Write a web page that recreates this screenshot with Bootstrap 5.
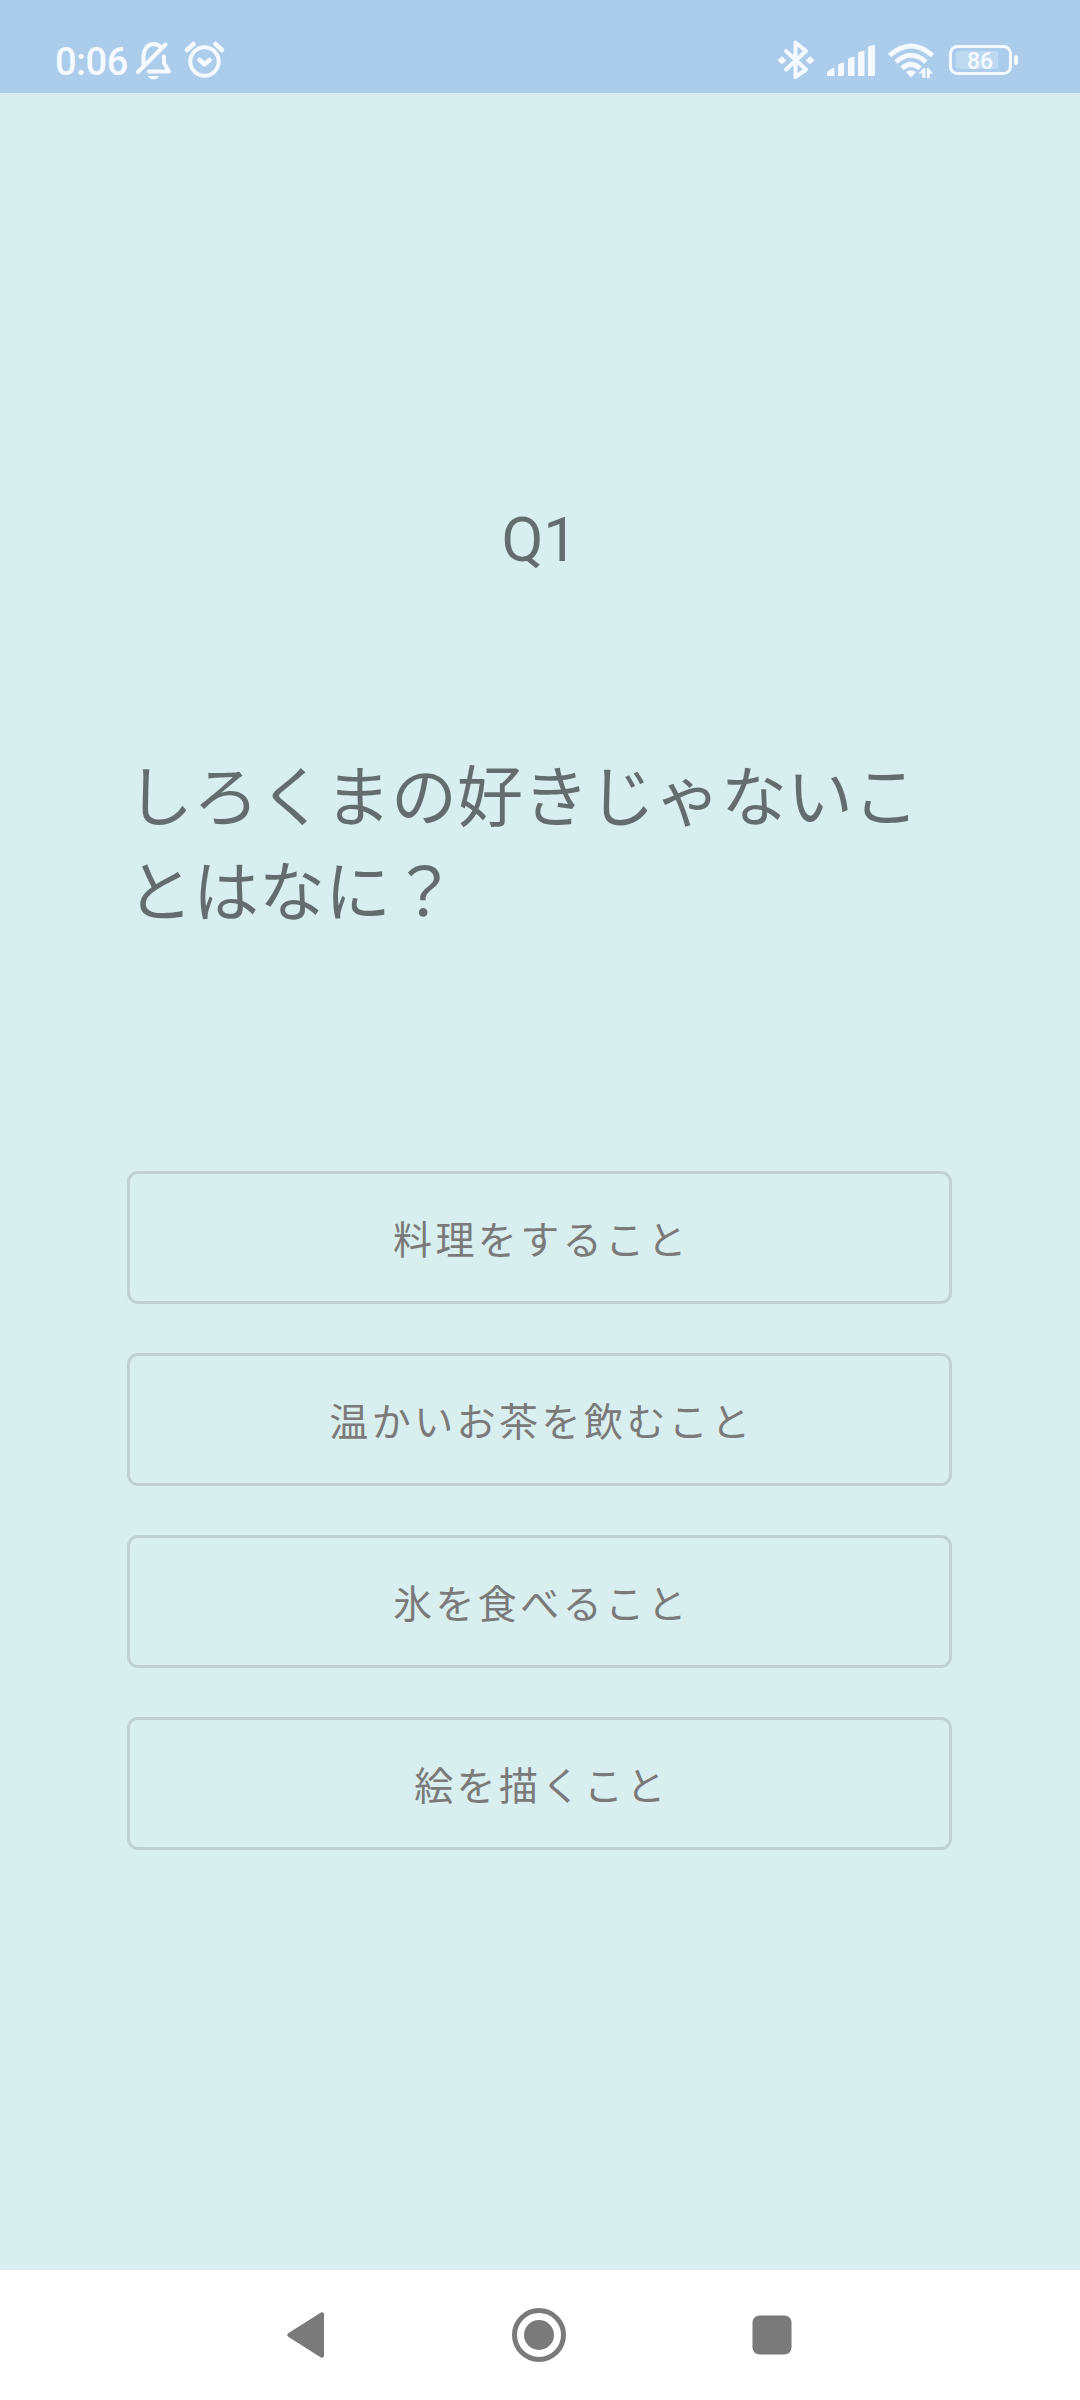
<!DOCTYPE html>
<html lang="ja">
<head>
<meta charset="utf-8">
<meta name="viewport" content="width=device-width, initial-scale=1">
<title>しろくまクイズ</title>
<link href="https://cdn.jsdelivr.net/npm/bootstrap@5.3.0/dist/css/bootstrap.min.css" rel="stylesheet">
<style>
  body { background: #d9eeee; font-family: Roboto, "Noto Sans CJK JP", sans-serif; }
  .screen { height: 2400px; width: 1080px; }
  .status-bar { height: 93px; background: #abcdeb; color: #f5faff; padding: 36px 60px 0 55px; }
  .clock { font-size: 38px; line-height: 53px; width: 79px; font-weight: 500; letter-spacing: -.5px; }
  .status-bar svg { display: block; }
  .left-icons { margin-top: 2px; }
  .quiz { padding: 0 128px 0 127px; }
  .q-number { font-size: 61px; line-height: 72px; margin-top: 411px; color: rgba(0,0,0,.54); }
  .q-text { font-size: 66px; line-height: 95px; margin-top: 169px; color: rgba(0,0,0,.54); font-family: "Noto Sans CJK JP", sans-serif; height: 192px; }
  .answers { gap: 49px; margin-top: 234px; }
  .answer { height: 133px; border: 3px solid #bfd1d0; border-radius: 11px; font-family: "Noto Sans CJK JP", sans-serif; font-size: 39px; letter-spacing: 3.44px; color: #7a7a7a; padding: 0 0 1px 4px; line-height: 56px; }
  .nav-keys { height: 130px; padding: 0 287px 0 286px; }
</style>
</head>
<body>
<div class="screen d-flex flex-column">
  <header class="status-bar d-flex justify-content-between">
    <div class="d-flex">
      <span class="clock">0:06</span>
      <svg width="94" height="44" viewBox="134 38 94 44" fill="none" stroke="currentColor" stroke-width="4" stroke-linecap="round" stroke-linejoin="round" class="left-icons">
        <path d="M143.500 64.500V56.500C143.500 49 148 44 153.500 44C156.500 44 159 45.200 161 47.500M165.500 44.500L138 72M164 56.500V63L169 71.500H149" />
        <path d="M148 76h11c-1 2.500-3 3.300-5.500 3.300S149 78.500 148 76z" fill="currentColor" stroke="none"/>
        <circle cx="204.500" cy="61.500" r="14.200"/>
        <path d="M187 50L193.500 44M222 50L215.500 44M199.500 60L204.500 64.300L209.500 60" stroke-width="4.600"/>
      </svg>
    </div>
    <svg width="244" height="48" viewBox="776 36 244 48" fill="currentColor">
      <path d="M786 51L806 69.500L795.500 77V42.500L806 51L786 69.500" fill="none" stroke="currentColor" stroke-width="4" stroke-linejoin="round" stroke-linecap="round"/>
      <path d="M778.800 60.300l3.200-2.800 3 2.800-3 2.800zM807 60.300l3-2.800 3.200 2.800-3.200 2.800z" stroke="currentColor" stroke-width="1.800" stroke-linejoin="round"/>
      <path d="M827 76v-3q0-1 1-1.700l4.500-3q2-1 2 1V76h-6q-1.500 0-1.500-1zM838 76V65.500q0-1 1-1.500l3.500-1.500q1.500-.5 1.500 1V74.500q0 1.500-1.500 1.500zM848 76V60q0-1.500 1.200-2l4-1.300q1.300-.3 1.300 1V74.500q0 1.500-1.500 1.500zM858 76V54q0-1.500 1.200-2l4-1.300q1.300-.3 1.300 1V74.500q0 1.500-1.500 1.500zM868 76V48q0-1.500 1.500-2l4-1q1.500-.3 1.500 1.200V74.500q0 1.500-1.500 1.500z"/>
      <g fill="none" stroke="currentColor" stroke-width="5">
        <path d="M889.500 55.500Q911 36.500 932.500 55.500M896 62Q911 48.500 926 62M902 68.300Q911 60.500 920 68.300"/>
      </g>
      <path d="M906 72q5-3.500 10 0l-3.700 4.300q-1.300 1.200-2.600 0zM918.500 73.500l5-5.500h1.800v10h-3v-4.500zM926.800 78V68h1.800l4.400 5.500h-3.200V78z"/>
      <rect x="950.500" y="46.500" width="60" height="27" rx="7" fill="none" stroke="currentColor" stroke-width="3"/>
      <rect x="956" y="51" width="42" height="18" rx="3" fill-opacity=".28"/>
      <rect x="1014" y="55" width="4" height="10" rx="2"/>
      <text x="980" y="69" font-family="Roboto" font-size="23" font-weight="500" text-anchor="middle">86</text>
    </svg>
  </header>

  <main class="quiz flex-grow-1">
    <h1 class="q-number fw-normal text-center mb-0">Q1</h1>
    <p class="q-text mb-0">しろくまの好きじゃないことはなに？</p>
    <div class="answers d-flex flex-column">
      <button type="button" class="btn answer w-100">料理をすること</button>
      <button type="button" class="btn answer w-100">温かいお茶を飲むこと</button>
      <button type="button" class="btn answer w-100">氷を食べること</button>
      <button type="button" class="btn answer w-100">絵を描くこと</button>
    </div>
  </main>

  <nav class="nav-keys bg-white d-flex align-items-center justify-content-between">
    <svg width="40" height="54" viewBox="286 2308 40 54" fill="#7a7a7a" stroke="#7a7a7a" stroke-width="4" stroke-linejoin="round"><path d="M289.300 2335L322 2314.300V2355.700z"/></svg>
    <svg width="54" height="54" viewBox="512 2308 54 54"><circle cx="539" cy="2335" r="24.500" fill="none" stroke="#7a7a7a" stroke-width="5"/><circle cx="539" cy="2335" r="15" fill="#7a7a7a"/></svg>
    <svg width="41" height="54" viewBox="752 2308 41 54"><rect x="752.500" y="2315.500" width="39" height="39" rx="7" fill="#7a7a7a"/></svg>
  </nav>
</div>
<script src="https://cdn.jsdelivr.net/npm/bootstrap@5.3.0/dist/js/bootstrap.bundle.min.js"></script>
</body>
</html>
